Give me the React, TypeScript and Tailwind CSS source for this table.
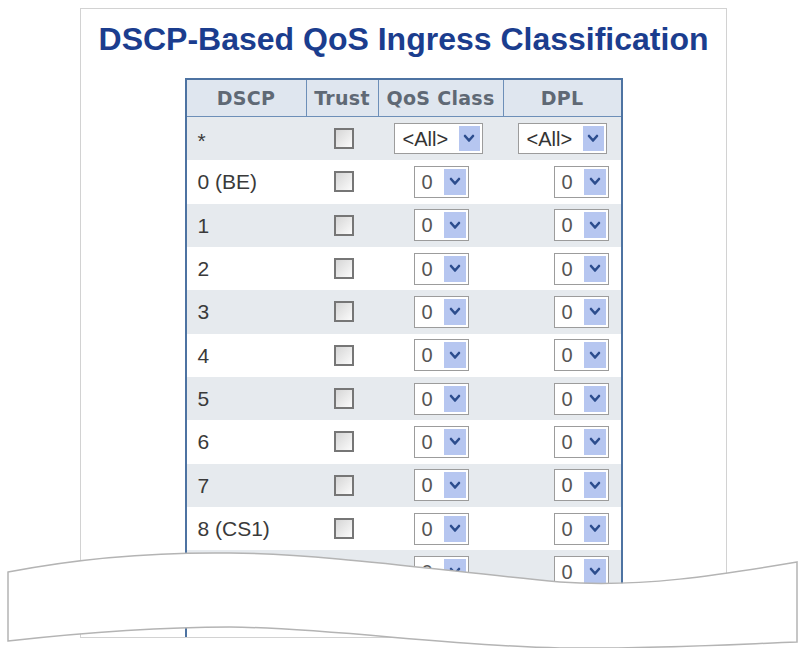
import React from "react";

const rows = ["0 (BE)", "1", "2", "3", "4", "5", "6", "7", "8 (CS1)", "9", "10"];

function Chevron() {
  return (
    <svg width="12" height="9" viewBox="0 0 12 9">
      <polyline
        points="2,2 6,6.5 10,2"
        fill="none"
        stroke="#2c4d8e"
        strokeWidth="2.6"
        strokeLinecap="round"
        strokeLinejoin="round"
      />
    </svg>
  );
}

function SelectBox({ label, wide }: { label: string; wide?: boolean }) {
  return (
    <div
      className={
        (wide ? "w-[89px] h-[31px]" : "w-[55px] h-[32px]") +
        " flex items-stretch border border-[#9c9c9c] bg-white p-[2px]"
      }
    >
      <div
        className={
          (wide ? "pl-[6px] text-[20px] text-[#333]" : "pl-[5px] text-[20px] text-[#555]") +
          " flex-1 flex items-center leading-none"
        }
        style={{ fontFamily: '"Liberation Sans", Arial, sans-serif' }}
      >
        {label}
      </div>
      <div className={(wide ? "w-[21px]" : "w-[22px]") + " bg-[#b6c6f0] flex items-center justify-center"}>
        <Chevron />
      </div>
    </div>
  );
}

function Check() {
  return (
    <div className="w-[20px] h-[21px] border-2 border-[#767676] bg-gradient-to-br from-[#d6d6d6] to-[#fbfbfb]" />
  );
}

export default function App() {
  return (
    <div
      className="relative w-[803px] h-[648px] overflow-hidden bg-white"
      style={{ fontFamily: '"Liberation Sans", Arial, sans-serif' }}
    >
      <div className="ml-[80px] mt-[8px] w-[647px] h-[630px] border border-[#d2d2d2] overflow-hidden flex flex-col items-center">
        <div className="pt-[14px] text-[32px] leading-[32px] font-bold text-[#1b3d8e] whitespace-nowrap">
          DSCP-Based QoS Ingress Classification
        </div>
        <div className="mt-[23px] w-[438px] border-l-2 border-r-2 border-t-2 border-[#4d73a2]">
          <div
            className="grid grid-cols-[119px_72px_125px_118px] h-[37px] bg-[#dfe6ef] border-b border-[#6d8fb8] text-[#5f6975] font-bold text-[19px] tracking-[0.3px]"
            style={{ fontFamily: '"DejaVu Sans", Verdana, sans-serif' }}
          >
            <div className="flex items-center justify-center">DSCP</div>
            <div className="flex items-center justify-center border-l border-[#6d8fb8]">Trust</div>
            <div className="flex items-center justify-center border-l border-[#6d8fb8]">QoS Class</div>
            <div className="flex items-center justify-center border-l border-[#6d8fb8]">DPL</div>
          </div>
          <div className="grid grid-cols-[119px_72px_125px_118px] h-[43.33px] bg-[#e6eaee] text-[21px] text-[#3a3a3a]">
            <div className="flex items-center pl-[11px] pt-[4px]">*</div>
            <div className="flex items-center justify-center pl-[4px]">
              <Check />
            </div>
            <div className="flex items-center justify-center pr-[4px]">
              <SelectBox label="<All>" wide />
            </div>
            <div className="flex items-center justify-end pr-[14px]">
              <SelectBox label="<All>" wide />
            </div>
          </div>
          {rows.map((r, i) => (
            <div
              key={r}
              className={
                (i % 2 === 0 ? "bg-white" : "bg-[#e6eaee]") +
                " grid grid-cols-[119px_72px_125px_118px] h-[43.33px] text-[21px] text-[#3a3a3a]"
              }
            >
              <div className="flex items-center pl-[11px]">{r}</div>
              <div className="flex items-center justify-center pl-[4px]">
                <Check />
              </div>
              <div className="flex items-center justify-center pl-[2px]">
                <SelectBox label="0" />
              </div>
              <div className="flex items-center justify-end pr-[12px]">
                <SelectBox label="0" />
              </div>
            </div>
          ))}
        </div>
      </div>
      <svg
        className="absolute left-0 top-0 pointer-events-none"
        width="803"
        height="648"
        viewBox="0 0 803 648"
      >
        <path
          d="M8,572 C80,558 150,552 230,553 C330,554 450,572 560,582 C640,588 720,575 797,562 L797,642 C720,645 650,649 560,648 C450,646 330,628 230,627 C150,627 80,633 8,641 Z"
          fill="#ffffff"
          stroke="#b4b4b4"
          strokeWidth="1.5"
        />
      </svg>
    </div>
  );
}
